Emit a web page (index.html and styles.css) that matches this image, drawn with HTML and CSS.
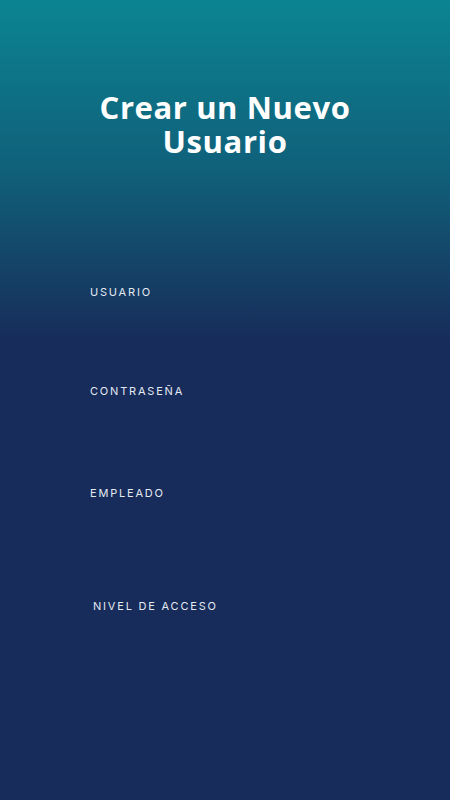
FILE: index.html
```html
<!DOCTYPE html>
<html lang="es">
<head>
<meta charset="utf-8">
<title>Crear un Nuevo Usuario</title>
<link rel="stylesheet" href="styles.css">
</head>
<body>
<main class="page">
  <h1 class="title">Crear un Nuevo<br>Usuario</h1>
  <form class="form">
    <div class="field field-user"><label class="label">USUARIO</label></div>
    <div class="field field-pass"><label class="label">CONTRASEÑA</label></div>
    <div class="field field-emp"><label class="label">EMPLEADO</label></div>
    <div class="field field-level"><label class="label">NIVEL DE ACCESO</label></div>
  </form>
</main>
</body>
</html>
```
FILE: styles.css
```css
html, body {
  margin: 0;
  padding: 0;
}
body {
  background: #172c5a;
}
.page {
  width: 450px;
  height: 800px;
  background: linear-gradient(to bottom, #0b8491 0px, #10607a 170px, #172c5a 340px, #172c5a 800px);
  display: flex;
  flex-direction: column;
  overflow: hidden;
}
.title {
  margin: 0;
  padding-top: 90px;
  text-align: center;
  color: #ffffff;
  font-family: "Open Sans", "Liberation Sans", sans-serif;
  font-weight: 700;
  font-size: 31px;
  line-height: 34px;
  letter-spacing: 0.6px;
}
.form {
  display: flex;
  flex-direction: column;
  padding-left: 90px;
}
.field {
  height: 16px;
  display: flex;
  align-items: center;
}
.field-user { margin-top: 126px; }
.field-pass { margin-top: 83px; }
.field-emp { margin-top: 86px; }
.field-level { margin-top: 97px; padding-left: 3px; }
.label {
  color: #e4e9f2;
  font-family: "Inter", "Liberation Sans", sans-serif;
  font-size: 11px;
  letter-spacing: 1.8px;
  font-weight: 400;
}
```
